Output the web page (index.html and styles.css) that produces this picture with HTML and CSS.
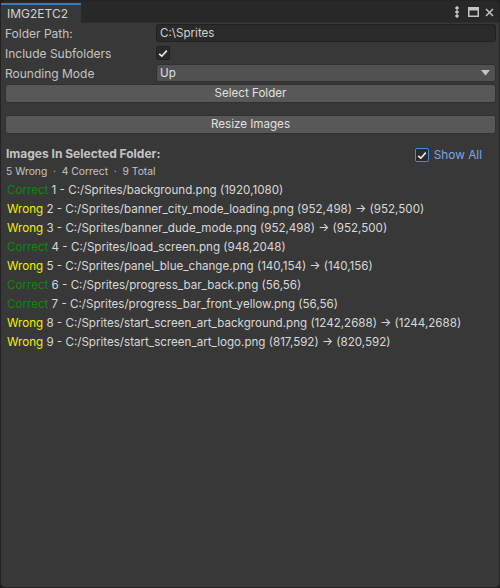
FILE: index.html
```html
<!DOCTYPE html>
<html lang="en">
<head>
  <meta charset="UTF-8" />
  <meta name="viewport" content="width=device-width, initial-scale=1.0"/>
  <title>IMG2ETC2</title>
  <link rel="stylesheet" href="styles.css">
</head>
<body>
  <div class="window">
    <div class="titlebar">
      <div class="tab">IMG2ETC2</div>
      <div class="controls">
        <svg width="4" height="12" viewBox="0 0 4 12"><circle cx="2" cy="2" r="1.3"/><circle cx="2" cy="6" r="1.3"/><circle cx="2" cy="10" r="1.3"/></svg>
        <svg width="11" height="10" viewBox="0 0 11 10"><rect x="0.75" y="0.75" width="9.5" height="8.5" fill="none" stroke-width="1.5"/><rect x="0.5" y="0.5" width="10" height="2.5"/></svg>
        <svg width="9" height="9" viewBox="0 0 9 9"><path d="M1 1 L8 8 M8 1 L1 8" fill="none" stroke-width="1.5"/></svg>
      </div>
    </div>

    <div class="content">
      <div class="row">
        <span class="label">Folder Path:</span>
        <div class="textfield">C:\Sprites</div>
      </div>
      <div class="row">
        <span class="label">Include Subfolders</span>
        <div class="checkbox">
          <svg width="10" height="9" viewBox="0 0 10 9"><path d="M1.2 4.8 L3.8 7.2 L8.8 1.6" fill="none" stroke-width="1.6"/></svg>
        </div>
      </div>
      <div class="row">
        <span class="label">Rounding Mode</span>
        <div class="dropdown">
          <span>Up</span>
          <svg width="9" height="6" viewBox="0 0 9 6"><path d="M0 0 H9 L4.5 5.5 Z"/></svg>
        </div>
      </div>

      <div class="button">Select Folder</div>
      <div class="button resize">Resize Images</div>

      <div class="list-head">
        <div>
          <div class="heading">Images In Selected Folder:</div>
          <div class="summary">5 Wrong &nbsp;·&nbsp; 4 Correct &nbsp;·&nbsp; 9 Total</div>
        </div>
        <label class="show-all">
          <span class="checkbox blue">
            <svg width="10" height="9" viewBox="0 0 10 9"><path d="M1.2 4.8 L3.8 7.2 L8.8 1.6" fill="none" stroke-width="1.6"/></svg>
          </span>
          Show All
        </label>
      </div>

      <ul class="images" id="images"></ul>
    </div>
  </div>

  <script>
    const images = [
      { name: 'background.png', size: [1920, 1080] },
      { name: 'banner_city_mode_loading.png', size: [952, 498], fixed: [952, 500] },
      { name: 'banner_dude_mode.png', size: [952, 498], fixed: [952, 500] },
      { name: 'load_screen.png', size: [948, 2048] },
      { name: 'panel_blue_change.png', size: [140, 154], fixed: [140, 156] },
      { name: 'progress_bar_back.png', size: [56, 56] },
      { name: 'progress_bar_front_yellow.png', size: [56, 56] },
      { name: 'start_screen_art_background.png', size: [1242, 2688], fixed: [1244, 2688] },
      { name: 'start_screen_art_logo.png', size: [817, 592], fixed: [820, 592] },
    ];

    const list = document.getElementById('images');
    images.forEach((img, i) => {
      const li = document.createElement('li');
      const tag = document.createElement('span');
      tag.className = img.fixed ? 'wrong' : 'correct';
      tag.innerText = img.fixed ? 'Wrong' : 'Correct';
      li.appendChild(tag);
      let text = ` ${i + 1} - C:/Sprites/${img.name} (${img.size.join(',')})`;
      if (img.fixed) text += ` \u2192 (${img.fixed.join(',')})`;
      li.appendChild(document.createTextNode(text));
      list.appendChild(li);
    });
  </script>
</body>
</html>
```

FILE: styles.css
```css
body {
  margin: 0;
  background: #1e1e1e;
  font-family: Inter, 'Noto Sans', sans-serif;
  font-size: 11.6px;
  color: #c4c4c4;
}

.window {
  height: 586px;
  background: #383838;
  border: 1px solid #232323;
  border-radius: 5px;
  overflow: hidden;
}

.titlebar {
  height: 21px;
  background: #282828;
  display: flex;
  justify-content: space-between;
  border-bottom: 1px solid #2e2e2e;
}

.tab {
  width: 74px;
  margin-top: 2px;
  margin-bottom: -1px;
  padding-left: 6px;
  background: #383838;
  border-top: 2px solid #3a79bb;
  color: #d2d2d2;
  font-size: 12px;
  line-height: 17px;
}

.controls {
  display: flex;
  align-items: center;
  gap: 6px;
  padding-right: 5px;
  padding-top: 1px;
}

.controls svg { fill: #c4c4c4; stroke: #c4c4c4; }
.controls svg:first-child { margin-right: 3px; }

.content {
  padding: 0 3px 0 4px;
}

.row {
  height: 20px;
  display: flex;
  align-items: center;
}

.label {
  width: 151px;
  flex-shrink: 0;
  font-size: 12px;
}

.textfield {
  flex: 1;
  height: 16px;
  line-height: 16px;
  padding-left: 3px;
  background: #2a2a2a;
  border: 1px solid #212121;
  border-radius: 3px;
  color: #d2d2d2;
}

.checkbox {
  width: 12px;
  height: 12px;
  background: #2a2a2a;
  border: 1px solid #212121;
  border-radius: 2px;
  display: flex;
  align-items: center;
  justify-content: center;
}

.checkbox svg { stroke: #eeeeee; }

.dropdown {
  flex: 1;
  height: 16px;
  line-height: 16px;
  padding: 0 5px 0 3px;
  background: #515151;
  border: 1px solid #303030;
  border-radius: 3px;
  display: flex;
  justify-content: space-between;
  align-items: center;
  color: #e0e0e0;
}

.dropdown svg { fill: #c4c4c4; }

.button {
  height: 17px;
  line-height: 17px;
  margin-top: 1px;
  background: #585858;
  border: 1px solid #303030;
  border-radius: 3px;
  text-align: center;
  color: #e0e0e0;
}

.button.resize { margin-top: 12px; }

.list-head {
  display: flex;
  justify-content: space-between;
  margin-top: 12px;
}

.heading {
  font-size: 12px;
  font-weight: bold;
  line-height: 16px;
  margin-left: 1px;
}

.summary {
  font-size: 10.3px;
  line-height: 19px;
  margin-left: 1px;
}

.show-all {
  display: flex;
  align-items: center;
  gap: 5px;
  height: 16px;
  margin-top: 1px;
  margin-right: 14px;
  color: #7aa9e3;
  font-size: 11.8px;
}

.checkbox.blue {
  border-color: #4a8ad6;
}

.images {
  list-style: none;
  margin: 0;
  padding: 0 0 0 2px;
  color: #d8d8d8;
}

.images li {
  height: 19px;
  line-height: 19px;
  white-space: nowrap;
}

.correct { color: #0c8a0c; }
.wrong { color: #f0f000; }
```
